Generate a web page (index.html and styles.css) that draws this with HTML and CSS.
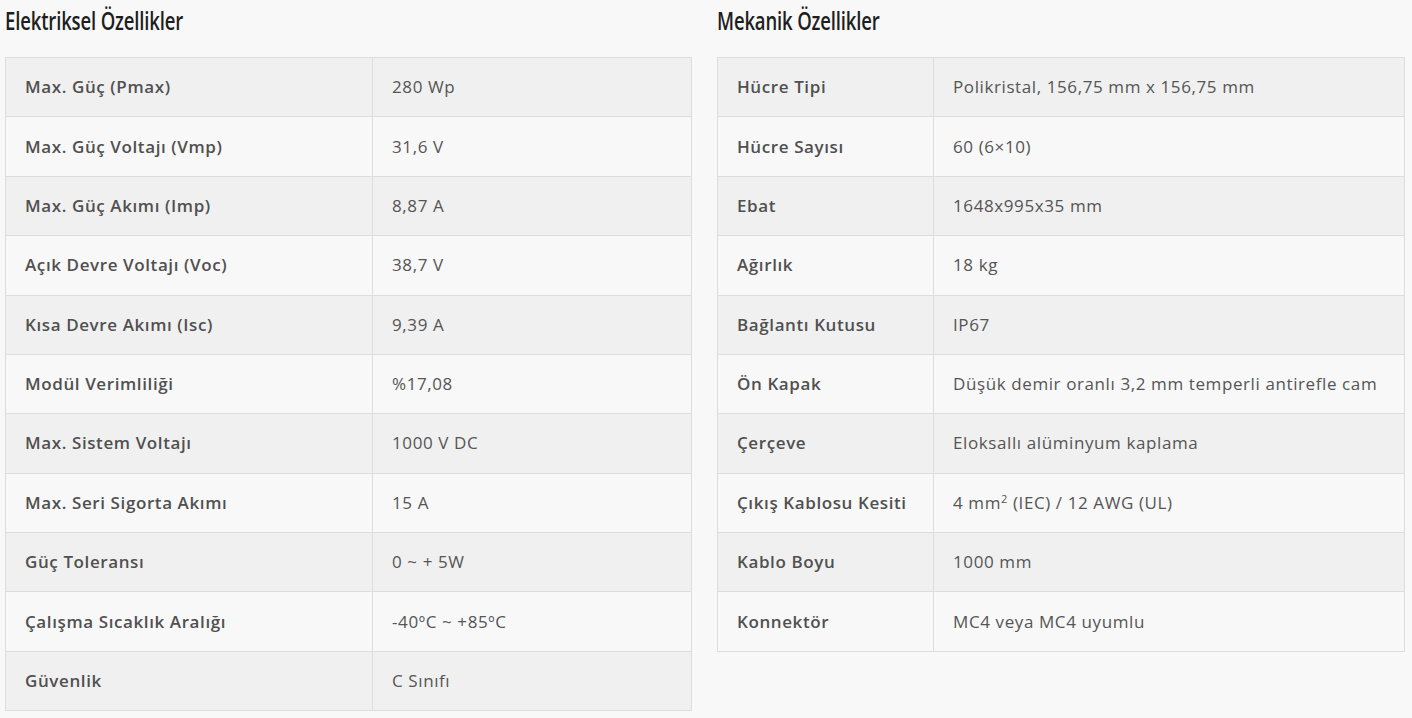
FILE: index.html
```html
<!DOCTYPE html>
<html lang="tr">
<head>
<meta charset="utf-8">
<title>Özellikler</title>
<link rel="stylesheet" href="styles.css">
</head>
<body>
<div class="page">
  <section class="spec">
    <h2 class="spec-title"><span class="spec-title-text">Elektriksel Özellikler</span></h2>
    <table class="spec-table left">
      <tbody>
        <tr><th>Max. Güç (Pmax)</th><td>280 Wp</td></tr>
        <tr><th>Max. Güç Voltajı (Vmp)</th><td>31,6 V</td></tr>
        <tr><th>Max. Güç Akımı (Imp)</th><td>8,87 A</td></tr>
        <tr><th>Açık Devre Voltajı (Voc)</th><td>38,7 V</td></tr>
        <tr><th>Kısa Devre Akımı (Isc)</th><td>9,39 A</td></tr>
        <tr><th>Modül Verimliliği</th><td>%17,08</td></tr>
        <tr><th>Max. Sistem Voltajı</th><td>1000 V DC</td></tr>
        <tr><th>Max. Seri Sigorta Akımı</th><td>15 A</td></tr>
        <tr><th>Güç Toleransı</th><td>0 ~ + 5W</td></tr>
        <tr><th>Çalışma Sıcaklık Aralığı</th><td>-40ºC ~ +85ºC</td></tr>
        <tr><th>Güvenlik</th><td>C Sınıfı</td></tr>
      </tbody>
    </table>
  </section>
  <section class="spec">
    <h2 class="spec-title"><span class="spec-title-text">Mekanik Özellikler</span></h2>
    <table class="spec-table right">
      <tbody>
        <tr><th>Hücre Tipi</th><td>Polikristal, 156,75 mm x 156,75 mm</td></tr>
        <tr><th>Hücre Sayısı</th><td>60 (6×10)</td></tr>
        <tr><th>Ebat</th><td>1648x995x35 mm</td></tr>
        <tr><th>Ağırlık</th><td>18 kg</td></tr>
        <tr><th>Bağlantı Kutusu</th><td>IP67</td></tr>
        <tr><th>Ön Kapak</th><td>Düşük demir oranlı 3,2 mm temperli antirefle cam</td></tr>
        <tr><th>Çerçeve</th><td>Eloksallı alüminyum kaplama</td></tr>
        <tr><th>Çıkış Kablosu Kesiti</th><td>4 mm<sup>2</sup> (IEC) / 12 AWG (UL)</td></tr>
        <tr><th>Kablo Boyu</th><td>1000 mm</td></tr>
        <tr><th>Konnektör</th><td>MC4 veya MC4 uyumlu</td></tr>
      </tbody>
    </table>
  </section>
</div>
</body>
</html>
```
FILE: styles.css
```css
html, body {
  margin: 0;
  padding: 0;
  background: #f8f8f8;
}
body {
  font-family: "Open Sans", "Liberation Sans", sans-serif;
  color: #555;
}
.page {
  display: grid;
  grid-template-columns: 687px 688px;
  column-gap: 25px;
  padding: 0 7px 0 5px;
}
.spec-title {
  margin: 0;
  height: 57px;
  box-sizing: border-box;
  padding-top: 4px;
  font-family: "Open Sans", "Liberation Sans", sans-serif;
  font-weight: 600;
  font-size: 25px;
  line-height: 32px;
  color: #1e1e1e;
  letter-spacing: -0.2px;
}
.spec-title-text {
  display: inline-block;
  transform: scaleX(0.74);
  transform-origin: left center;
}
.spec-table {
  width: 100%;
  border-collapse: collapse;
  border: 1px solid #dddddd;
}
.spec-table th,
.spec-table td {
  border: 1px solid #dddddd;
  padding: 17.2px 19px;
  line-height: 24px;
  font-size: 17px;
  letter-spacing: 0.6px;
  text-align: left;
  vertical-align: middle;
  white-space: nowrap;
}
.spec-table th {
  font-weight: 600;
  color: #505050;
}
.spec-table td {
  font-weight: 400;
  color: #555;
}
.spec-table.left th { width: 328px; }
.spec-table.right th { width: 177px; }
.spec-table tr:nth-child(odd) { background: #f0f0f0; }
.spec-table tr:nth-child(even) { background: #f8f8f8; }
.spec-table sup {
  font-size: 11px;
  line-height: 0;
  vertical-align: 6px;
}
```
